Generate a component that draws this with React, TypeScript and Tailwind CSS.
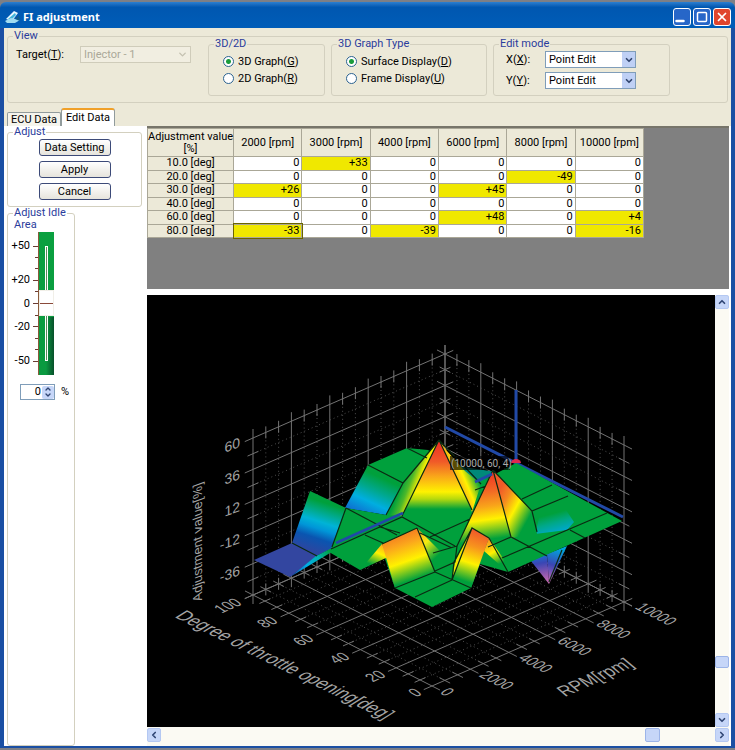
import { useState } from 'react'
import type { ReactNode } from 'react'
import { ChevronDown, ChevronLeft, ChevronRight, ChevronUp, Minus, Square, X } from 'lucide-react'

const columns = ['2000', '3000', '4000', '6000', '8000', '10000']

const rows = [
  { deg: '10.0', values: [0, 33, 0, 0, 0, 0] },
  { deg: '20.0', values: [0, 0, 0, 0, -49, 0] },
  { deg: '30.0', values: [26, 0, 0, 45, 0, 0] },
  { deg: '40.0', values: [0, 0, 0, 0, 0, 0] },
  { deg: '60.0', values: [0, 0, 0, 48, 0, 4] },
  { deg: '80.0', values: [-33, 0, -39, 0, 0, -16] },
]

const scale = ['+50', '', '', '+20', '', '0', '', '-20', '', '', '-50']

const signed = (n: number) => (n > 0 ? `+${n}` : `${n}`)

function Group({ title, className = '', children }: { title: string; className?: string; children: ReactNode }) {
  return (
    <fieldset className={`min-w-0 rounded-[3px] border border-[#d3d0bf] ${className}`}>
      <legend className="ml-[5px] px-px text-[11px] leading-3 text-[#2a3c9c]">{title}</legend>
      {children}
    </fieldset>
  )
}

function Radio({ name, label, hotkey, checked, onChange }: {
  name: string
  label: string
  hotkey: string
  checked: boolean
  onChange: () => void
}) {
  return (
    <label className="flex h-[17px] items-center gap-1 whitespace-nowrap">
      <input
        type="radio"
        name={name}
        checked={checked}
        onChange={onChange}
        className="size-[11px] appearance-none rounded-full border border-[#2b6290] bg-white checked:bg-[radial-gradient(circle,#1a9c3c_0_2px,#fff_3px)]"
      />
      <span>{label}(<u>{hotkey}</u>)</span>
    </label>
  )
}

function ModeSelect({ id, axis }: { id: string; axis: string }) {
  return (
    <div className="flex h-[17px] items-center">
      <label htmlFor={id} className="w-[39px]">{axis}(<u>{axis}</u>):</label>
      <div className="relative h-[17px] w-[91px]">
        <select id={id} className="block size-full appearance-none border border-[#7f9db9] bg-white pl-[3px] leading-3">
          <option>Point Edit</option>
          <option>Area Edit</option>
        </select>
        <span className="pointer-events-none absolute inset-y-px right-px flex w-[13px] items-center justify-center bg-[#bfd0f5] text-[#31456f]">
          <ChevronDown size={10} strokeWidth={4} />
        </span>
      </div>
    </div>
  )
}

function ScrollButton({ label, children }: { label: string; children: ReactNode }) {
  return (
    <button aria-label={label} className="flex size-[14px] shrink-0 items-center justify-center rounded-[2px] border border-[#b4c8f2] bg-[#c6d6f8] text-[#2f4573]">
      {children}
    </button>
  )
}

/* ---- 3D graph ---- */

type Pt = [number, number]

// u runs along RPM, v along throttle opening, w along the adjustment value
const project = (u: number, v: number, w: number): Pt => [432 + 192 * u - 179 * v, 686 - 84 * u - 91 * v - 157 * w]

const steps = (count: number, minor: number) =>
  Array.from({ length: count * minor + 1 }, (_, i) => ({ t: i / (count * minor), major: i % minor === 0 }))

function GridLine({ from, to, major }: { from: Pt; to: Pt; major: boolean }) {
  const len = Math.hypot(to[0] - from[0], to[1] - from[1])
  const dx = (to[0] - from[0]) / len
  const dy = (to[1] - from[1]) / len
  const out = major ? 9 : 6
  if (major) {
    return (
      <path
        d={`M${from[0] - dx * out} ${from[1] - dy * out}L${to[0] + dx * out} ${to[1] + dy * out}`}
        stroke="#737373"
      />
    )
  }
  return (
    <>
      <path d={`M${from[0]} ${from[1]}L${to[0]} ${to[1]}`} stroke="#505050" strokeDasharray="1 3" />
      <path
        d={`M${from[0] - dx * out} ${from[1] - dy * out}l${dx * 12} ${dy * 12}M${to[0] + dx * out} ${to[1] + dy * out}l${-dx * 12} ${-dy * 12}`}
        stroke="#737373"
      />
    </>
  )
}

function Grid() {
  return (
    <g fill="none" strokeWidth="1">
      {steps(5, 3).map(({ t, major }) => (
        <g key={t}>
          <GridLine from={project(t, 1, 0)} to={project(t, 1, 1)} major={major} />
          <GridLine from={project(1, t, 0)} to={project(1, t, 1)} major={major} />
          <GridLine from={project(t, 0, 0)} to={project(t, 1, 0)} major={major} />
          <GridLine from={project(0, t, 0)} to={project(1, t, 0)} major={major} />
        </g>
      ))}
      {steps(5, 2).map(({ t, major }) => (
        <g key={t}>
          <GridLine from={project(0, 1, t)} to={project(1, 1, t)} major={major} />
          <GridLine from={project(1, 1, t)} to={project(1, 0, t)} major={major} />
        </g>
      ))}
    </g>
  )
}

const GREEN = '#00a03c'

const gradients: { id: string; line: [number, number, number, number]; stops: [number, string][] }[] = [
  { id: 'peakFront', line: [439, 440, 439, 512], stops: [[0, '#ee2a24'], [0.3, '#f05a28'], [0.5, '#f9a51a'], [0.72, '#fff200'], [0.82, '#b5d90d'], [0.96, GREEN]] },
  { id: 'peakLeft', line: [402, 482, 438, 496], stops: [[0, GREEN], [0.2, '#4db82a'], [0.42, '#fff200'], [0.7, '#f9a51a'], [1, '#f05a28']] },
  { id: 'peakRight', line: [446, 482, 474, 470], stops: [[0, '#f05a28'], [0.3, '#f9a51a'], [0.6, '#fff200'], [1, GREEN]] },
  { id: 'peak2Front', line: [486, 470, 496, 542], stops: [[0, '#ee2a24'], [0.3, '#f26a25'], [0.5, '#f9a51a'], [0.68, '#fff200'], [0.95, GREEN]] },
  { id: 'peak2Right', line: [494, 500, 530, 520], stops: [[0, '#f05a28'], [0.25, '#f58a20'], [0.55, '#fff200'], [0.95, GREEN]] },
  { id: 'slopeLeft', line: [325, 497, 308, 550], stops: [[0.1, GREEN], [0.45, '#00b3d6'], [0.58, '#0096d8'], [0.75, '#0a55b0'], [1, '#2c46a0']] },
  { id: 'slopeBack', line: [386, 472, 366, 516], stops: [[0.15, GREEN], [0.45, '#00a890'], [0.7, '#00aee0'], [1, '#0f6fd0']] },
  { id: 'sliver', line: [292, 576, 330, 550], stops: [[0, '#1a55b5'], [0.4, '#00aee6'], [0.7, '#00b0b0'], [1, GREEN]] },
  { id: 'ridge', line: [398, 536, 414, 582], stops: [[0, '#f58220'], [0.2, '#fba61c'], [0.55, '#fff200'], [0.95, GREEN]] },
  { id: 'ridgeLeft', line: [383, 544, 373, 568], stops: [[0, '#fba61c'], [0.4, '#fff200'], [0.9, GREEN]] },
  { id: 'ridgeRight', line: [418, 532, 440, 556], stops: [[0, '#fba61c'], [0.4, '#f6ec10'], [0.95, GREEN]] },
  { id: 'block', line: [480, 532, 464, 582], stops: [[0, '#f15a29'], [0.3, '#f7941d'], [0.62, '#fff200'], [0.98, GREEN]] },
  { id: 'blockRight', line: [488, 540, 502, 566], stops: [[0, '#f7941d'], [0.45, '#fff200'], [0.9, GREEN]] },
  { id: 'dip', line: [556, 532, 551, 514], stops: [[0, '#00a8c8'], [0.5, '#00a888'], [1, GREEN]] },
  { id: 'spike', line: [545, 555, 550, 584], stops: [[0, '#1d6bd0'], [0.25, '#3a46b4'], [0.6, '#8a56ae'], [1, '#d470b8']] },
  { id: 'spikeRight', line: [560, 549, 550, 582], stops: [[0, '#00a5dc'], [0.5, '#3a46b4'], [1, '#c86ab8']] },
]

const faces: [string, string][] = [
  ['url(#spike)', '531,561 547,554 549,584'],
  ['url(#spikeRight)', '547,554 567,546 549,584'],
  ['#00897a', '458,466 496,472 480,484'],
  [GREEN, '368,465 407,448 428,450 438,456 430,500 403,513 386,515 403,483'],
  ['url(#slopeBack)', '368,465 403,483 386,515 345,508'],
  [GREEN, '346,508 386,515 403,511 440,500 472,495 480,482 516,463 622,521 508,572 480,564 471,588 432,607 395,588 384,556 360,570 329,552'],
  ['#3346a0', '254,560 292,543 317,556 290,577'],
  ['url(#slopeLeft)', '310,491 346,508 331,549 316,556 292,543'],
  ['url(#sliver)', '290,577 316,556 332,548 340,545 330,553'],
  ['url(#peakRight)', '439,440 447,451 465,471 481,484 472,512'],
  ['url(#peakLeft)', '439,440 403,483 386,515 402,516'],
  ['url(#peakFront)', '439,440 402,516 430,522 472,510'],
  ['url(#dip)', '535,534 567,530 574,522 566,510 540,514'],
  ['url(#peak2Right)', '493,470 532,511 537,534 511,538'],
  ['url(#peak2Front)', '493,470 457,546 511,538'],
  ['url(#ridgeLeft)', '382,544 360,570 388,557'],
  ['url(#ridgeRight)', '417,528 444,555 434,572'],
  ['url(#ridge)', '382,544 417,528 435,572 395,588'],
  ['#f4e400', '472,528 455,562 452,580'],
  ['url(#blockRight)', '489,538 503,558 508,572 484,551'],
  ['url(#block)', '472,528 489,538 471,588 452,580'],
]

const meshLines = [
  'M403 483L439 440L402 516M439 440L472 510M439 440L481 484',
  'M407 448L427 458M368 465L403 483L386 515M292 543L317 556M346 508L332 547',
  'M331 549L402 517L455 546M346 508L397 535M365 535L383 543M380 527L400 533',
  'M417 528L435 572L395 588M382 544L417 528M435 572L471 588M415 597L452 580',
  'M430 537L470 519M420 533L452 548M433 553L457 546M435 571L455 562L457 546',
  'M493 470L457 546M493 470L511 537M493 470L532 511L537 532',
  'M472 528L454 562L452 580L472 528L489 538M489 538L508 572',
  'M488 547L511 537L547 556M502 558L607 513M522 499L552 485M532 511L568 496M570 530L585 538M475 490L486 486M562 550L549 582',
]

const valueLabels = ['60', '36', '12', '-12', '-36']
const throttleLabels = ['100', '80', '60', '40', '20', '0']
const rpmLabels = ['0', '2000', '4000', '6000', '8000', '10000']

function AxisText({ x, y, turn, anchor = 'start', size = 14, children }: {
  x: number
  y: number
  turn: string
  anchor?: 'start' | 'end'
  size?: number
  children: ReactNode
}) {
  return (
    <text transform={`translate(${x} ${y}) ${turn}`} textAnchor={anchor} fontSize={size}>
      {children}
    </text>
  )
}

function SurfaceGraph() {
  return (
    <svg viewBox="147 295 568 432" className="block min-w-0 flex-1 bg-black" role="img" aria-label="3D surface graph">
      <defs>
        {gradients.map(({ id, line: [x1, y1, x2, y2], stops }) => (
          <linearGradient key={id} id={id} gradientUnits="userSpaceOnUse" x1={x1} y1={y1} x2={x2} y2={y2}>
            {stops.map(([offset, color]) => (
              <stop key={offset} offset={offset} stopColor={color} />
            ))}
          </linearGradient>
        ))}
      </defs>

      <Grid />

      {/* cursor on the back wall */}
      <path d="M445 427L516 463L623 517M516 390V463" fill="none" stroke="#2149a6" strokeWidth="3" />

      {faces.map(([fill, points]) => (
        <polygon key={points} points={points} fill={fill} />
      ))}
      <path d={meshLines.join('')} fill="none" stroke="#0b2a12" strokeWidth="1.2" />
      <path d="M336 543L403 513M475 482L492 474" fill="none" stroke="#2149a6" strokeWidth="3" />

      <path d="M511 463a5 4 0 0 1 10 0z" fill="#e0284f" />
      <rect x="450" y="456" width="60" height="14" fill="#000" fillOpacity="0.65" />
      <text x="451" y="467" fontSize="10" fill="#a9a9a9" className="font-['Roboto',sans-serif]">(10000, 60, 4)</text>

      <g fill="#a3a3a3" className="font-['Liberation_Sans',sans-serif]">
        {valueLabels.map((text, i) => (
          <AxisText key={text} x={240} y={447 + i * 32} turn="skewY(-20)" anchor="end">{text}</AxisText>
        ))}
        {throttleLabels.map((text, i) => (
          <AxisText key={text} x={243 + i * 36} y={604 + i * 18} turn="rotate(-24) skewX(32)" anchor="end">{text}</AxisText>
        ))}
        {rpmLabels.map((text, i) => (
          <AxisText key={text} x={439 + i * 39} y={693 - i * 17} turn="rotate(27) skewX(-32)">{text}</AxisText>
        ))}
        <AxisText x={202} y={600} turn="rotate(-90) skewX(20)" size={13}>Adjustment value[%]</AxisText>
        <AxisText x={174} y={617} turn="rotate(26) skewX(-32)" size={17}>Degree of throttle opening[deg]</AxisText>
        <AxisText x={565} y={697} turn="rotate(-24) skewX(26)" size={17}>RPM[rpm]</AxisText>
      </g>
    </svg>
  )
}

function TitleBar() {
  const button = 'flex size-[18px] items-center justify-center rounded-[3px] border border-white'
  return (
    <header className="flex h-[26px] items-center gap-[2px] rounded-t-md bg-linear-to-b from-[#2b7fd0] via-[#0057b0] via-20% to-[#005db8] pt-[3px] pr-1 pl-[5px] text-white">
      <svg viewBox="0 0 16 14" className="h-[14px] w-4">
        <path d="M1 9L9 1l4 2-6 8z" fill="#e8f8ff" />
        <path d="M3 9l7-6 1 2-5 5z" fill="#3fb6dc" />
        <path d="M0 11l6-3 9 2-5 3H2z" fill="#9fdcf0" />
        <path d="M10 9l4-4 1 6z" fill="#0f5d8c" />
      </svg>
      <h1 className="flex-1 font-['Noto_Sans',sans-serif] text-[11px] font-bold">FI adjustment</h1>
      <div className="flex gap-[2px]">
        <button aria-label="Minimize" className={`${button} bg-[#2766c8]`}><Minus size={12} strokeWidth={5} className="mt-2 -ml-1" /></button>
        <button aria-label="Maximize" className={`${button} bg-[#2766c8]`}><Square size={12} strokeWidth={3} /></button>
        <button aria-label="Close" className={`${button} bg-[#e0452c]`}><X size={14} strokeWidth={3} /></button>
      </div>
    </header>
  )
}

function ViewPanel() {
  const [mode, setMode] = useState('3D')
  const [type, setType] = useState('Surface')
  return (
    <Group title="View" className="pb-[6px]">
      <div className="-mt-1 flex">
        <div className="mt-2 flex h-[17px] w-[200px] items-center text-black">
          <label htmlFor="target" className="w-[72px] pl-2">Target(<u>T</u>):</label>
          <div className="relative h-[17px] w-[111px]">
            <select id="target" disabled className="block size-full appearance-none border border-[#cfccba] bg-[#f1eee1] pl-[3px] leading-3 text-[#aaa898] opacity-100">
              <option>Injector - 1</option>
            </select>
            <ChevronDown size={11} strokeWidth={3} className="pointer-events-none absolute top-[3px] right-[3px] text-[#c4c1b0]" />
          </div>
        </div>
        <div className="flex flex-1 gap-[6px]">
          <Group title="3D/2D" className="w-[117px] pb-2">
            <div className="pt-[3px] pl-[14px]">
              <Radio name="mode" label="3D Graph" hotkey="G" checked={mode === '3D'} onChange={() => setMode('3D')} />
              <Radio name="mode" label="2D Graph" hotkey="R" checked={mode === '2D'} onChange={() => setMode('2D')} />
            </div>
          </Group>
          <Group title="3D Graph Type" className="w-[156px] pb-2">
            <div className="pt-[3px] pl-[14px]">
              <Radio name="type" label="Surface Display" hotkey="D" checked={type === 'Surface'} onChange={() => setType('Surface')} />
              <Radio name="type" label="Frame Display" hotkey="U" checked={type === 'Frame'} onChange={() => setType('Frame')} />
            </div>
          </Group>
          <Group title="Edit mode" className="w-[177px]">
            <div className="flex flex-col gap-1 pt-px pl-3">
              <ModeSelect id="mode-x" axis="X" />
              <ModeSelect id="mode-y" axis="Y" />
            </div>
          </Group>
        </div>
      </div>
    </Group>
  )
}

function IdleSlider() {
  const [value, setValue] = useState(0)
  return (
    <div>
      <div className="mt-px flex h-[143px]">
        <div className="flex w-[30px] flex-col justify-between pt-2 pb-2">
          {scale.map((mark, i) => (
            <div key={i} className="flex h-3 items-center justify-end gap-[3px]">
              <span className="leading-3">{mark}</span>
              <i className={`h-px bg-[#6b3b32] ${mark ? 'w-[5px]' : 'w-[3px]'}`} />
            </div>
          ))}
        </div>
        <div className="relative flex w-4 justify-center border-l border-[#8a5a3a] bg-linear-to-b from-[#0aa040] to-[#0a9a40]">
          <div className="absolute right-0 bottom-0 h-[58px] w-2 bg-linear-to-r from-[#0a9a40] to-[#07502a]" />
          <div className="relative my-[14px] w-[3px] border border-white bg-[#5c8a5c]" />
          <div className="absolute inset-x-0 top-[58px] flex h-[26px] items-center border border-[#f1efe8] bg-white">
            <i className="h-px w-full bg-[#8a4a3a]" />
          </div>
          <input
            type="range"
            aria-label="Idle area adjustment"
            min={-50}
            max={50}
            value={value}
            onChange={(e) => setValue(Number(e.target.value))}
            className="absolute inset-0 h-full w-full opacity-0 [direction:rtl] [writing-mode:vertical-lr]"
          />
        </div>
      </div>
      <div className="mt-[9px] ml-3 flex items-center gap-[6px]">
        <div className="flex h-4 w-[35px] items-center border border-[#7f9db9] bg-white">
          <input
            aria-label="Idle percent"
            value={value}
            onChange={(e) => setValue(Number(e.target.value) || 0)}
            className="w-5 text-right leading-3"
          />
          <span className="ml-px flex h-[13px] w-3 flex-col overflow-hidden rounded-[2px] bg-[#c6d6f8] text-[#2f4573]">
            <button aria-label="Increase" onClick={() => setValue(value + 1)} className="flex h-[6px] items-center justify-center"><ChevronUp size={8} strokeWidth={4} /></button>
            <button aria-label="Decrease" onClick={() => setValue(value - 1)} className="flex h-[7px] items-center justify-center"><ChevronDown size={8} strokeWidth={4} /></button>
          </span>
        </div>
        <span>%</span>
      </div>
    </div>
  )
}

function SidePanel() {
  const actions = ['Data Setting', 'Apply', 'Cancel']
  return (
    <aside className="flex w-[140px] shrink-0 flex-col pr-[5px]">
      <Group title="Adjust" className="pb-[6px]">
        <div className="flex flex-col items-center gap-[5px] pt-px">
          {actions.map((label) => (
            <button key={label} className="h-[17px] w-[72px] rounded-[3px] border border-[#3c4a78] bg-linear-to-b from-white to-[#e6e4dc] leading-3">
              {label}
            </button>
          ))}
        </div>
      </Group>
      <Group title="Adjust Idle" className="w-[68px] flex-1">
        <p className="ml-[6px] leading-3 text-[#2a3c9c]">Area</p>
        <IdleSlider />
      </Group>
    </aside>
  )
}

function AdjustmentTable() {
  const head = 'border border-[#aaa797] bg-[#ece9d8] p-0 font-normal whitespace-nowrap'
  return (
    <div className="h-[163px] border-t-2 border-[#77756a] bg-[#808080]">
      <table className="h-[110px] w-[497px] table-fixed border-collapse leading-3">
        <thead>
          <tr className="h-7">
            <th className={`${head} w-[86px]`}>Adjustment value<br />[%]</th>
            {columns.map((rpm) => (
              <th key={rpm} className={head}>{rpm} [rpm]</th>
            ))}
          </tr>
        </thead>
        <tbody>
          {rows.map(({ deg, values }) => (
            <tr key={deg}>
              <th className={head}>{deg} [deg]</th>
              {values.map((n, i) => (
                <td
                  key={i}
                  className={`border border-[#aaa797] py-0 pr-[2px] text-right ${n ? 'bg-[#f0e800]' : 'bg-white'} ${
                    deg === '80.0' && i === 0 ? 'outline outline-[#6b6400]' : ''
                  }`}
                >
                  {signed(n)}
                </td>
              ))}
            </tr>
          ))}
        </tbody>
      </table>
    </div>
  )
}

export default function App() {
  return (
    <div className="min-h-screen bg-[#7d7f86] pt-[2px] pb-[2px] font-['Roboto',sans-serif] text-[11px] leading-3 text-black">
      <TitleBar />
      <div className="border-x-4 border-b-2 border-[#1b4fa3] bg-[#ece9d8]">
        <div className="px-[3px] pt-[2px]">
          <ViewPanel />
          <div role="tablist" className="flex h-[23px] items-end">
            <button role="tab" aria-selected="false" className="h-[14px] w-[54px] rounded-t-[2px] border border-b-0 border-[#919b9c] bg-[#f5f4ec]">ECU Data</button>
            <button role="tab" aria-selected="true" className="h-[18px] w-[54px] rounded-t-[3px] border border-t-2 border-b-0 border-[#919b9c] border-t-[#f0a028] bg-white">Edit Data</button>
          </div>
        </div>
        <main className="flex bg-white pr-[2px] pl-[3px]">
          <SidePanel />
          <div className="min-w-0 flex-1">
            <AdjustmentTable />
            <div className="mt-[6px] flex bg-[#fbfaf3]">
              <SurfaceGraph />
              <div className="flex w-[14px] flex-col">
                <ScrollButton label="Scroll up"><ChevronUp size={10} strokeWidth={4} /></ScrollButton>
                <div className="flex-1" />
                <div className="mb-[45px] h-3 rounded-[2px] border border-[#9cb4e8] bg-[#c6d6f8]" />
                <ScrollButton label="Scroll down"><ChevronDown size={10} strokeWidth={4} /></ScrollButton>
              </div>
            </div>
            <div className="flex h-[19px] bg-[#fbfaf3] pt-px">
              <ScrollButton label="Scroll left"><ChevronLeft size={10} strokeWidth={4} /></ScrollButton>
              <div className="flex-1" />
              <div className="mr-[55px] h-[14px] w-[15px] rounded-[2px] border border-[#9cb4e8] bg-[#c6d6f8]" />
              <ScrollButton label="Scroll right"><ChevronRight size={10} strokeWidth={4} /></ScrollButton>
            </div>
          </div>
        </main>
      </div>
    </div>
  )
}
